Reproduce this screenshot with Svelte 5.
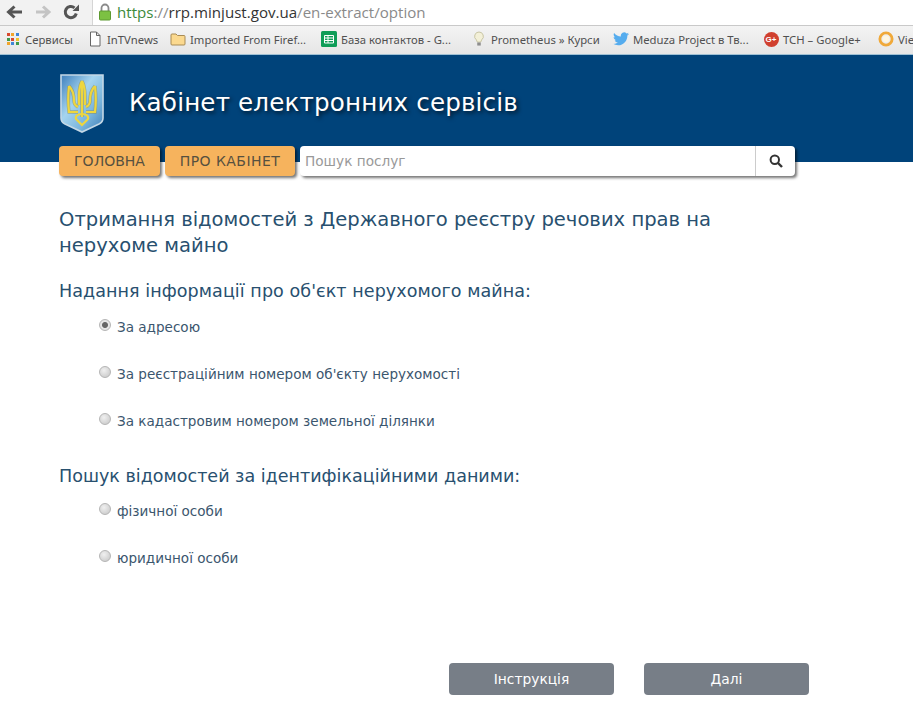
<script>
  const bookmarks = [
    { t: 'Сервисы', i: 'apps', w: 82 },
    { t: 'InTVnews', i: 'doc', w: 83 },
    { t: 'Imported From Firef...', i: 'folder', w: 151 },
    { t: 'База контактов - G...', i: 'sheet', w: 150 },
    { t: 'Prometheus » Курси', i: 'bulb', w: 142 },
    { t: 'Meduza Project в Тв...', i: 'bird', w: 150 },
    { t: 'ТСН – Google+', i: 'gplus', w: 115 },
    { t: 'Vie', i: 'ring', w: 40 }
  ];
  const appColors = ['#d8492f','#f1a52b','#3f86d8','#3f9a4b','#d8492f','#f1c52b','#f1a52b','#3f86d8','#3f9a4b'];
</script>

<div class="browser">
  <div class="toolbar">
    <div class="navs">
      <svg width="18" height="14" viewBox="0 0 18 14"><path d="M17 7H4.500M9.500 1.500 3.500 7l6 5.500" fill="none" stroke="#555" stroke-width="3"/></svg>
      <svg width="18" height="14" viewBox="0 0 18 14"><path d="M2 7h12.500M9 1.500 15 7l-6 5.500" fill="none" stroke="#c4c4c4" stroke-width="3"/></svg>
      <svg width="16" height="16" viewBox="0 0 16 16"><path d="M13.300 9.500A5.600 5.600 0 1 1 11.500 3.800" fill="none" stroke="#555" stroke-width="3"/><path d="M9.500 7h6.500V.5z" fill="#555"/></svg>
    </div>
    <div class="address">
      <svg width="14" height="19" viewBox="0 0 14 19"><path d="M3.500 9V6a3.500 3.500 0 0 1 7 0v3" fill="none" stroke="#8a8a8a" stroke-width="1.800"/><rect x="1.500" y="9" width="11" height="9" rx="1" fill="#7cc142" stroke="#5d9a30"/></svg>
      <span class="url"><span class="green">https</span><span class="gray">://</span><span class="dark">rrp.minjust.gov.ua</span><span class="gray">/en-extract/option</span></span>
    </div>
  </div>
  <div class="bookmarks">
    {#each bookmarks as b}
      <div class="bm" style="width:{b.w}px">
        <span class="ico">
        {#if b.i === 'apps'}
          <span class="apps">{#each appColors as c}<i style="background:{c}"></i>{/each}</span>
        {:else if b.i === 'doc'}
          <svg width="14" height="16" viewBox="0 0 14 16"><path d="M2.500 1h6l3.500 3.500V15h-9.500z M8.500 1v3.500H12" fill="#fff" stroke="#666"/></svg>
        {:else if b.i === 'folder'}
          <svg width="16" height="14" viewBox="0 0 16 14"><path d="M1 3a1 1 0 0 1 1-1h4l1.500 1.500H14a1 1 0 0 1 1 1V12a1 1 0 0 1-1 1H2a1 1 0 0 1-1-1z" fill="#fbd98f" stroke="#a88b55"/></svg>
        {:else if b.i === 'sheet'}
          <svg width="16" height="16" viewBox="0 0 16 16"><rect width="16" height="16" rx="1.500" fill="#0f9d58"/><path d="M3.500 4.500h9v7.500h-9zM3.500 7h9M3.500 9.500h9M7 4.500V12" fill="none" stroke="#fff"/></svg>
        {:else if b.i === 'bulb'}
          <svg width="14" height="18" viewBox="0 0 16 18"><path d="M8 1a5 5 0 0 1 3 9l-1 2.500H6L5 10a5 5 0 0 1 3-9z" fill="#f3f0d8" stroke="#c2bf9c"/><rect x="6" y="13" width="4" height="3.500" fill="#8d8d8d"/></svg>
        {:else if b.i === 'bird'}
          <svg width="16" height="14" viewBox="0 0 24 20"><path d="M24 2.400c-.9.400-1.800.7-2.800.8 1-.6 1.800-1.600 2.200-2.700-1 .6-2 1-3.100 1.200A4.900 4.900 0 0 0 11.900 6.200C7.800 6 4.200 4.100 1.700.9c-1.300 2.200-.7 5.100 1.500 6.600-.8 0-1.600-.2-2.200-.6 0 2.400 1.700 4.400 3.900 4.900-.7.200-1.500.2-2.200.1.600 2 2.400 3.400 4.600 3.400A9.900 9.900 0 0 1 0 17.300 14 14 0 0 0 7.500 19.500c9.100 0 14.300-7.700 14-14.600 1-.7 1.800-1.600 2.500-2.500z" fill="#55acee"/></svg>
        {:else if b.i === 'gplus'}
          <span class="gp">G+</span>
        {:else}
          <svg width="16" height="16" viewBox="0 0 17 17"><circle cx="8.500" cy="8.500" r="6.500" fill="none" stroke="#f0a93a" stroke-width="3"/><circle cx="8.500" cy="8.500" r="3.500" fill="#fff6df"/></svg>
        {/if}
        </span>
        <span>{b.t}</span>
      </div>
    {/each}
  </div>
</div>

<header class="hero">
  <svg class="shield" width="44" height="59" viewBox="0 0 44 59">
    <defs>
      <linearGradient id="sg" x1="0" y1="0" x2="1" y2="1">
        <stop offset="0" stop-color="#3d7fbd"/><stop offset=".4" stop-color="#a5d4ef"/><stop offset=".7" stop-color="#79b4dc"/><stop offset="1" stop-color="#3f7fb8"/>
      </linearGradient>
    </defs>
    <path d="M1 1h42v43q0 4-4 6L22 58 5 50q-4-2-4-6z" fill="url(#sg)" stroke="#c4d8e6" stroke-width="1.600"/>
    <g fill="none" stroke="#8a8a50" stroke-width="3.400" opacity=".55">
      <path d="M22 7v36M22 7c-2 4-3 8-3 14v10M22 7c2 4 3 8 3 14v10M9 12c-1 9-1 18 0 26h9M35 12c1 9 1 18 0 26H26M9 12c3 3 5 9 5 15 0 3 2 5 4 6M35 12c-3 3-5 9-5 15 0 3-2 5-4 6"/>
    </g>
    <g fill="none" stroke="#eed63e" stroke-width="2.200">
      <path d="M22 7v36M22 7c-2 4-3 8-3 14v10M22 7c2 4 3 8 3 14v10"/>
      <path d="M9 12c-1 9-1 18 0 26h9M35 12c1 9 1 18 0 26H26"/>
      <path d="M9 12c3 3 5 9 5 15 0 3 2 5 4 6M35 12c-3 3-5 9-5 15 0 3-2 5-4 6"/>
      <path d="M22 51l-6-6c-1-3 2-5 6-5s7 2 6 5z"/>
    </g>
  </svg>
  <h1>Кабінет електронних сервісів</h1>
</header>

<nav class="nav">
  <a class="tab t1">ГОЛОВНА</a>
  <a class="tab t2">ПРО КАБІНЕТ</a>
  <div class="search">
    <input placeholder="Пошук послуг" />
    <button aria-label="search">
      <svg width="14" height="14" viewBox="0 0 14 14"><circle cx="5.800" cy="5.800" r="4.200" fill="none" stroke="#333" stroke-width="2"/><path d="M9 9l4 4" stroke="#333" stroke-width="2.400"/></svg>
    </button>
  </div>
</nav>

<main class="content">
  <h2>Отримання відомостей з Державного реєстру речових прав на нерухоме майно</h2>
  <h3 class="sec1">Надання інформації про об'єкт нерухомого майна:</h3>
  <div class="opts o1">
    <label><span class="radio on"></span>За адресою</label>
    <label><span class="radio"></span>За реєстраційним номером об'єкту нерухомості</label>
    <label><span class="radio"></span>За кадастровим номером земельної ділянки</label>
  </div>
  <h3 class="sec2">Пошук відомостей за ідентифікаційними даними:</h3>
  <div class="opts o2">
    <label><span class="radio"></span>фізичної особи</label>
    <label><span class="radio"></span>юридичної особи</label>
  </div>
  <div class="actions">
    <button class="act">Інструкція</button>
    <button class="act">Далі</button>
  </div>
</main>

<style>
  :global(body) { margin: 0; background: #fff; overflow: hidden; }
  .toolbar { height: 26px; box-sizing: border-box; display: flex; background: #f2f2f2; border-bottom: 1px solid #c9c9c9; }
  .navs { width: 92px; flex: none; display: flex; align-items: center; gap: 11px; padding: 0 0 2px 5px; box-sizing: border-box; }
  .address { flex: 1; background: #fff; border-left: 1px solid #d5d5d5; display: flex; align-items: center; gap: 5px; padding: 0 0 2px 5px; }
  .url { font: 15.100px/1 "Open Sans", "Noto Sans", sans-serif; position: relative; top: 1px; }
  .green { color: #3c8a3a; }
  .gray { color: #8a8a8a; }
  .dark { color: #333; }
  .bookmarks { height: 29px; box-sizing: border-box; display: flex; align-items: center; padding: 0 0 2px 5px; background: linear-gradient(#f4f4f4, #e6e6e6); border-bottom: 1px solid #9fc0d4; overflow: hidden; }
  .bm { display: flex; align-items: center; gap: 4px; flex: none; font: 11.300px "Noto Sans", sans-serif; color: #505050; white-space: nowrap; }
  .ico { width: 16px; flex: none; display: flex; justify-content: center; }
  .apps { display: grid; grid-template-columns: repeat(3, 3px); gap: 1.500px; width: 13px; }
  .apps i { width: 3px; height: 3px; display: block; }
  .gp { width: 15px; height: 15px; border-radius: 50%; background: #d0402f; color: #fff; font: bold 8px/15px "Liberation Sans", sans-serif; text-align: center; }
  .hero { height: 107px; box-sizing: border-box; background: #00437a; display: flex; align-items: flex-start; gap: 25px; padding: 19px 0 0 60px; }
  .shield { flex: none; }
  h1 { margin: 13px 0 0; font: 400 24.600px/32px "DejaVu Sans", Verdana, sans-serif; letter-spacing: .15px; color: #fff; text-shadow: 2px 2px 4px rgba(0,0,0,.7); }
  .nav { display: flex; height: 30px; margin: -16px 0 0 59px; position: relative; }
  .tab { box-sizing: border-box; height: 30px; background: #f6b35d; border-radius: 4px; box-shadow: 2px 2px 3px rgba(0,0,0,.55); color: #56503f; font: 14px/30px "DejaVu Sans", sans-serif; text-align: center; }
  .t1 { width: 101px; }
  .t2 { width: 130px; margin-left: 5px; letter-spacing: .45px; }
  .search { width: 495px; margin-left: 5px; display: flex; background: #fff; border-radius: 4px; box-shadow: 2px 2px 3px rgba(0,0,0,.55); }
  .search input { flex: 1; min-width: 0; border: 0; outline: 0; background: none; padding: 0 5px; font: 13.650px "DejaVu Sans", sans-serif; color: #333; }
  .search input::placeholder { color: #999; opacity: 1; }
  .search button { width: 40px; border: 0; border-left: 1px solid #ccc; background: none; padding: 0; display: flex; align-items: center; justify-content: center; }
  .content { padding-left: 59px; }
  h2 { margin: 31px 0 0; width: 700px; font: 400 19.560px/26px "DejaVu Sans", sans-serif; color: #28506f; }
  h3 { margin: 0; font: 400 17.550px/24px "DejaVu Sans", sans-serif; color: #28506f; }
  .sec1 { margin-top: 20px; letter-spacing: .06px; }
  .sec2 { margin-top: 34px; }
  .opts { display: flex; flex-direction: column; gap: 29px; margin-left: 40px; }
  .o1 { margin-top: 15px; }
  .o2 { margin-top: 14px; }
  .opts label { display: flex; align-items: center; height: 18px; font: 13.550px/18px "DejaVu Sans", sans-serif; color: #3b566e; }
  .radio { width: 12px; height: 12px; margin-right: 6px; box-sizing: border-box; border-radius: 50%; border: 1px solid #b5b5b5; background: radial-gradient(circle at 40% 35%, #f0f0f0, #c4c4c4); position: relative; top: -2px; }
  .radio.on { background: radial-gradient(circle, #666 0 2.500px, #e6e6e6 3.500px); }
  .actions { display: flex; gap: 30px; margin: 96px 0 0 390px; }
  .act { width: 165px; height: 32px; border: 0; border-radius: 4px; background: #777e87; color: #fff; font: 13.800px "DejaVu Sans", sans-serif; padding: 0; }
</style>
